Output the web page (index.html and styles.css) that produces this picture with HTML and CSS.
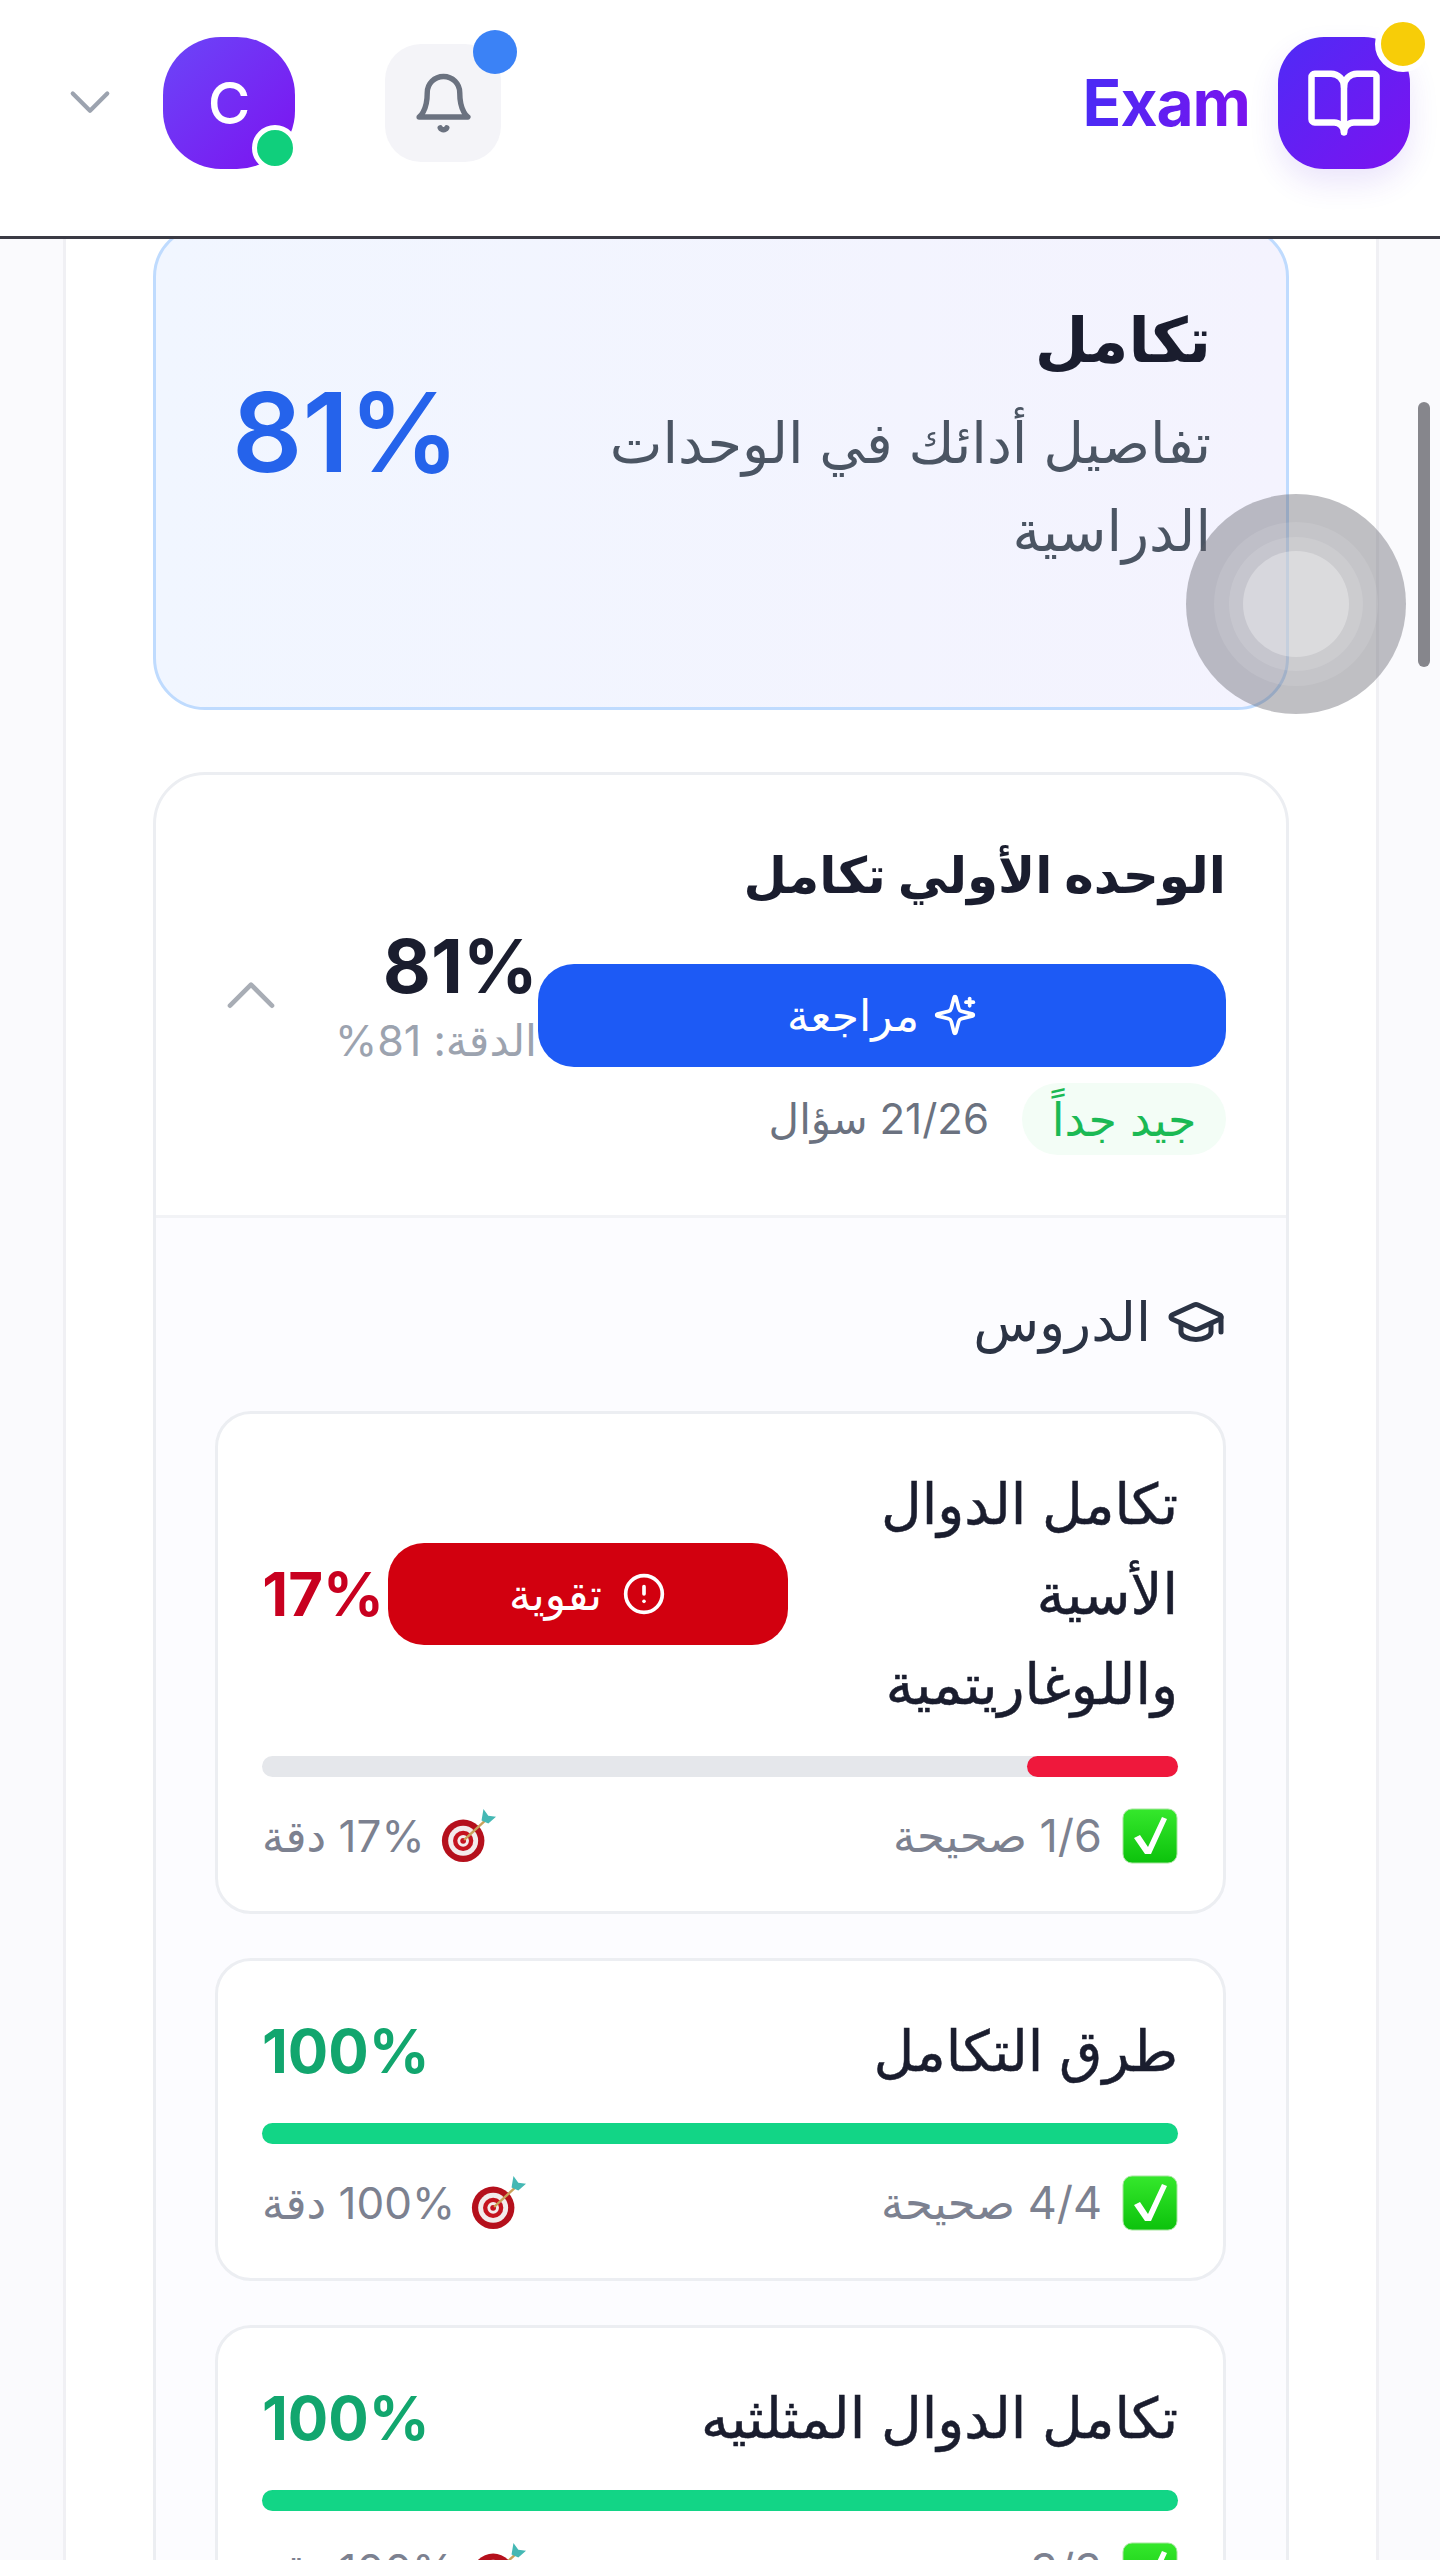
FILE: index.html
```html
<!DOCTYPE html>
<html lang="ar" dir="rtl">
<head>
<meta charset="utf-8">
<title>Exam</title>
<link rel="stylesheet" href="styles.css">
</head>
<body>
<div class="screen">
  <header class="topbar">
    <div class="brand">
      <div class="logo">
        <svg class="logo-icon" viewBox="0 0 24 24"><path d="M12 7v14"/><path d="M3 18a1 1 0 0 1-1-1V4a1 1 0 0 1 1-1h5a4 4 0 0 1 4 4 4 4 0 0 1 4-4h5a1 1 0 0 1 1 1v13a1 1 0 0 1-1 1h-6a3 3 0 0 0-3 3 3 3 0 0 0-3-3z"/></svg>
        <span class="logo-dot"></span>
      </div>
      <span class="brand-name">Exam</span>
    </div>
    <div class="user-tools">
      <div class="bell">
        <svg class="bell-icon" viewBox="0 0 24 24"><path d="M6 8a6 6 0 0 1 12 0c0 7 3 9 3 9H3s3-2 3-9"/><path d="M10.8 21a1.4 1.4 0 0 0 2.4 0"/></svg>
        <span class="bell-dot"></span>
      </div>
      <div class="avatar">C<span class="avatar-dot"></span></div>
      <svg class="chev-down" viewBox="0 0 24 24"><path d="m3 7 9 9 9-9"/></svg>
    </div>
  </header>

  <main class="panel">
    <section class="hero">
      <div class="hero-text">
        <h1 class="hero-title">تكامل</h1>
        <p class="hero-sub">تفاصيل أدائك في الوحدات الدراسية</p>
      </div>
      <div class="hero-score">81%</div>
    </section>

    <section class="unit">
      <div class="unit-head">
        <div class="unit-main">
          <h2 class="unit-title">الوحده الأولي تكامل</h2>
          <button class="btn btn-blue">
            <svg class="btn-icon" viewBox="0 0 24 24"><path d="M9.937 15.5A2 2 0 0 0 8.5 14.063l-6.135-1.582a.5.5 0 0 1 0-.962L8.5 9.936A2 2 0 0 0 9.937 8.5l1.582-6.135a.5.5 0 0 1 .963 0L14.063 8.5A2 2 0 0 0 15.5 9.937l6.135 1.581a.5.5 0 0 1 0 .964L15.5 14.063a2 2 0 0 0-1.437 1.437l-1.582 6.135a.5.5 0 0 1-.963 0z"/><path d="M20 3v4"/><path d="M22 5h-4"/></svg>
            مراجعة
          </button>
          <div class="unit-meta">
            <span class="badge">جيد جداً</span>
            <span class="meta-count">21/26 سؤال</span>
          </div>
        </div>
        <div class="unit-score">
          <div class="unit-pct">81%</div>
          <div class="unit-acc">الدقة: 81&rlm;%</div>
        </div>
        <svg class="chev-up" viewBox="0 0 24 24"><path d="m3 17 9-9 9 9"/></svg>
      </div>

      <div class="lessons">
        <div class="lessons-head">
          <svg class="cap-icon" viewBox="0 0 24 24"><path d="M21.42 10.922a1 1 0 0 0-.019-1.838L12.83 5.18a2 2 0 0 0-1.66 0L2.6 9.08a1 1 0 0 0 0 1.832l8.57 3.908a2 2 0 0 0 1.66 0z"/><path d="M22 10v6"/><path d="M6 12.5V16a6 3 0 0 0 12 0v-3.5"/></svg>
          <span>الدروس</span>
        </div>

        <article class="lesson">
          <div class="lesson-top">
            <h3 class="lesson-title lesson-title-wrap">تكامل الدوال الأسية واللوغاريتمية</h3>
            <button class="btn btn-red">
              <svg class="btn-icon" viewBox="0 0 24 24"><circle cx="12" cy="12" r="10"/><path d="M12 8v4"/><path d="M12 16h.01"/></svg>
              تقوية
            </button>
            <span class="lesson-pct pct-red">17%</span>
          </div>
          <div class="track"><div class="fill fill-red" style="width:16.5%"></div></div>
          <div class="lesson-foot">
            <span class="foot-item">
              <svg class="emoji-check" viewBox="0 0 56 56"><use href="#check"/></svg>
              1/6 صحيحة
            </span>
            <span class="foot-item foot-acc">
              <svg class="emoji-target" viewBox="0 0 60 60"><use href="#target"/></svg>
              17% دقة
            </span>
          </div>
        </article>

        <article class="lesson">
          <div class="lesson-top">
            <h3 class="lesson-title">طرق التكامل</h3>
            <span class="lesson-pct pct-green">100%</span>
          </div>
          <div class="track"><div class="fill fill-green" style="width:100%"></div></div>
          <div class="lesson-foot">
            <span class="foot-item">
              <svg class="emoji-check" viewBox="0 0 56 56"><use href="#check"/></svg>
              4/4 صحيحة
            </span>
            <span class="foot-item foot-acc">
              <svg class="emoji-target" viewBox="0 0 60 60"><use href="#target"/></svg>
              100% دقة
            </span>
          </div>
        </article>

        <article class="lesson">
          <div class="lesson-top">
            <h3 class="lesson-title">تكامل الدوال المثلثيه</h3>
            <span class="lesson-pct pct-green">100%</span>
          </div>
          <div class="track"><div class="fill fill-green" style="width:100%"></div></div>
          <div class="lesson-foot">
            <span class="foot-item">
              <svg class="emoji-check" viewBox="0 0 56 56"><use href="#check"/></svg>
              3/3 صحيحة
            </span>
            <span class="foot-item foot-acc">
              <svg class="emoji-target" viewBox="0 0 60 60"><use href="#target"/></svg>
              100% دقة
            </span>
          </div>
        </article>
      </div>
    </section>
  </main>

  <div class="scroll-thumb"></div>
  <div class="touch"><div class="touch-a"><div class="touch-b"><div class="touch-c"></div></div></div></div>
</div>

<svg class="defs" width="0" height="0" aria-hidden="true">
  <defs>
    <linearGradient id="checkbg" x1="0" y1="0" x2="0" y2="1"><stop offset="0" stop-color="#35e82c"/><stop offset="1" stop-color="#0cc20c"/></linearGradient>
    <symbol id="check" viewBox="0 0 56 56">
      <rect x="1" y="1" width="54" height="54" rx="9" fill="url(#checkbg)" stroke="#a5e59d" stroke-width="1"/>
      <path d="M12 30l6-3 8 12L40 9l5 2-16 35h-6z" fill="#fff"/>
    </symbol>
    <symbol id="target" viewBox="0 0 60 60">
      <circle cx="25" cy="35" r="22" fill="#b5101c"/>
      <circle cx="25" cy="35" r="15.5" fill="#f3ecec"/>
      <circle cx="25" cy="35" r="10.5" fill="#c5141f"/>
      <circle cx="25" cy="35" r="6" fill="#f3ecec"/>
      <circle cx="25" cy="35" r="3" fill="#c5141f"/>
      <path d="M26 34 50 12" stroke="#c9a25a" stroke-width="2.5"/>
      <path d="M44 14l2-12 5 7 8 1-8 7z" fill="#45b8b4"/>
    </symbol>
  </defs>
</svg>
</body>
</html>
```
FILE: styles.css
```css
* { box-sizing: border-box; }
html, body { margin: 0; padding: 0; }
body {
  width: 1440px;
  height: 2560px;
  background: #fafafd;
  font-family: Inter, "Noto Sans", "DejaVu Sans", sans-serif;
  color: #1a1d2e;
}
h1, h2, h3, p { margin: 0; font-weight: inherit; font-size: inherit; }
button { font-family: inherit; border: 0; }
.defs { position: absolute; }

.screen { position: relative; width: 1440px; height: 2560px; overflow: hidden; }

.topbar {
  position: relative;
  z-index: 2;
  height: 239px;
  background: #fff;
  border-bottom: 3px solid #3a3a44;
  display: flex;
  justify-content: space-between;
  padding: 37px 30px 0 67px;
}
.brand { display: flex; gap: 28px; height: 132px; align-items: center; }
.logo {
  position: relative;
  width: 132px;
  height: 132px;
  border-radius: 46px;
  background: linear-gradient(135deg, #4f2bf6, #7c12f0);
  box-shadow: 0 14px 30px rgba(90, 40, 220, .12);
  display: flex;
  align-items: center;
  justify-content: center;
}
.logo-icon { width: 78px; height: 78px; fill: none; stroke: #fff; stroke-width: 2; stroke-linecap: round; stroke-linejoin: round; }
.logo-dot {
  position: absolute;
  top: -21px;
  left: 97px;
  width: 56px;
  height: 56px;
  border-radius: 50%;
  background: #f7cd08;
  border: 6px solid #fff;
}
.brand-name {
  font-size: 64px;
  font-weight: 700;
  line-height: 78px;
  letter-spacing: -1px;
  background: linear-gradient(90deg, #4a2bf5, #7a12ee);
  -webkit-background-clip: text;
  background-clip: text;
  color: transparent;
}
.user-tools { display: flex; align-items: center; height: 132px; }
.bell {
  position: relative;
  width: 116px;
  height: 118px;
  border-radius: 36px;
  background: #f4f4f8;
  display: flex;
  align-items: center;
  justify-content: center;
  margin-left: 90px;
}
.bell-icon { width: 65px; height: 65px; fill: none; stroke: #6b7280; stroke-width: 2; stroke-linecap: round; stroke-linejoin: round; }
.bell-dot {
  position: absolute;
  top: -14px;
  left: 88px;
  width: 44px;
  height: 44px;
  border-radius: 50%;
  background: #3b82f6;
}
.avatar {
  position: relative;
  width: 132px;
  height: 132px;
  border-radius: 58px;
  background: linear-gradient(135deg, #6b46f8, #7c12f0);
  color: #fff;
  font-size: 58px;
  font-weight: 500;
  display: flex;
  align-items: center;
  justify-content: center;
  margin-left: 50px;
}
.avatar-dot {
  position: absolute;
  left: 89px;
  bottom: -2px;
  width: 46px;
  height: 46px;
  border-radius: 50%;
  background: #10cf7c;
  border: 5px solid #fff;
}
.chev-down { width: 46px; height: 46px; fill: none; stroke: #9ca3af; stroke-width: 2.2; stroke-linecap: round; stroke-linejoin: round; }

.panel {
  margin: -14px 61px 0 63px;
  background: #fff;
  border-inline: 3px solid #f0f0f4;
  padding: 0 87px;
  height: 2400px;
}
.hero {
  height: 485px;
  border: 3px solid #bfdbfe;
  border-radius: 52px;
  background: linear-gradient(90deg, #f1f6ff, #f4f3fe);
  display: flex;
  justify-content: space-between;
  padding: 44px 75px 0 76px;
}
.hero-text { width: 620px; padding-top: 25px; }
.hero-title { font-size: 62px; font-weight: 700; line-height: 86px; color: #1a1d2e; }
.hero-sub { font-size: 56px; line-height: 88px; color: #4b5563; margin-top: 16px; }
.hero-score { font-size: 110px; font-weight: 600; line-height: 120px; color: #2563eb; margin-top: 100px; }

.unit {
  margin-top: 62px;
  border: 3px solid #eceef2;
  border-radius: 52px;
  background: #fff;
  overflow: hidden;
  height: 1900px;
}
.unit-head {
  display: flex;
  align-items: center;
  height: 443px;
  padding: 0 60px 0 67px;
  border-bottom: 3px solid #f2f3f6;
}
.unit-main { width: 688px; flex: none; }
.unit-title { font-size: 50px; font-weight: 700; line-height: 78px; }
.btn {
  display: flex;
  align-items: center;
  justify-content: center;
  gap: 20px;
  color: #fff;
  font-size: 44px;
  border-radius: 36px;
}
.btn-blue { width: 100%; height: 103px; background: #1d5af5; margin-top: 50px; gap: 14px; }
.btn-red { width: 400px; height: 102px; background: #d2000f; flex: none; }
.btn-icon { width: 44px; height: 44px; fill: none; stroke: #fff; stroke-width: 2; stroke-linecap: round; stroke-linejoin: round; }
.unit-meta { display: flex; align-items: center; gap: 33px; margin-top: 16px; }
.badge {
  width: 204px;
  height: 72px;
  border-radius: 36px;
  background: #f3fdf6;
  color: #1bb954;
  font-size: 46px;
  display: flex;
  align-items: center;
  justify-content: center;
}
.meta-count { font-size: 42px; color: #6b7280; }
.unit-score { width: 203px; flex: none; text-align: left; padding-top: 8px; }
.unit-pct { font-size: 74px; font-weight: 700; line-height: 78px; text-align: right; direction: ltr; }
.unit-acc { font-size: 43px; line-height: 62px; color: #9ca3af; margin-top: 4px; white-space: nowrap; }
.chev-up { width: 56px; height: 56px; margin-right: auto; fill: none; stroke: #a8adb5; stroke-width: 2; stroke-linecap: round; stroke-linejoin: round; margin-bottom: 2px; }

.lessons { background: #fcfcff; padding: 0 60px 60px 59px; height: 1500px; }
.lessons-head {
  display: flex;
  align-items: center;
  gap: 15px;
  height: 193px;
  padding-top: 14px;
  font-size: 54px;
  color: #2b3344;
}
.cap-icon { width: 60px; height: 60px; fill: none; stroke: #2b3344; stroke-width: 2; stroke-linecap: round; stroke-linejoin: round; }

.lesson {
  background: #fff;
  border: 3px solid #eceef2;
  border-radius: 36px;
  padding: 45px 45px 48px 44px;
  margin-bottom: 44px;
}
.lesson-top { display: flex; align-items: center; justify-content: space-between; }
.lesson-title { font-size: 56px; line-height: 90px; color: #1a1d2e; -webkit-text-stroke: .5px #1a1d2e; }
.lesson-title-wrap { width: 390px; }
.lesson-pct { font-size: 60px; font-weight: 700; line-height: 90px; }
.pct-red { color: #c8001f; width: 122px; margin-right: 3px; flex: none; }
.pct-green { color: #12a66e; }
.track { height: 21px; margin-top: 27px; background: #e5e7eb; border-radius: 11px; }
.fill { height: 100%; border-radius: 11px; }
.fill-red { background: #ef183c; }
.fill-green { background: #12d586; }
.lesson-foot { display: flex; justify-content: space-between; align-items: center; margin-top: 31px; height: 55px; }
.foot-item { display: flex; align-items: center; gap: 20px; font-size: 45px; color: #7c8190; }
.foot-acc { gap: 14px; font-size: 44px; }
.emoji-check { width: 56px; height: 56px; }
.emoji-target { width: 58px; height: 58px; }

.scroll-thumb {
  position: absolute;
  top: 402px;
  left: 1418px;
  width: 12px;
  height: 265px;
  border-radius: 6px;
  background: #86868c;
  z-index: 3;
}
.touch {
  position: absolute;
  top: 494px;
  left: 1186px;
  width: 220px;
  height: 220px;
  border-radius: 50%;
  background: rgba(95, 95, 105, .4);
  display: flex;
  align-items: center;
  justify-content: center;
  z-index: 4;
}
.touch-a { width: 164px; height: 164px; border-radius: 50%; background: rgba(255,255,255,.1); display: flex; align-items: center; justify-content: center; }
.touch-b { width: 134px; height: 134px; border-radius: 50%; background: rgba(255,255,255,.12); display: flex; align-items: center; justify-content: center; }
.touch-c { width: 106px; height: 106px; border-radius: 50%; background: rgba(255,255,255,.3); }
```
